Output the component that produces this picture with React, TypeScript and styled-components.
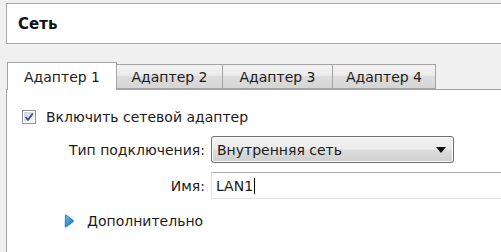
import React from "react";
import styled, { createGlobalStyle } from "styled-components";

const Global = createGlobalStyle`
  html, body { margin: 0; padding: 0; background: #f0f0f0; }
  body { font-family: "DejaVu Sans", Verdana, sans-serif; color: #1b1b1b; }
`;

const Page = styled.div`
  width: 501px;
  height: 252px;
  overflow: hidden;
  background: #f0f0f0;
  padding: 3px 0 0 6px;
  box-sizing: border-box;
  display: flex;
  flex-direction: column;
`;

const Header = styled.div`
  height: 41px;
  box-sizing: border-box;
  background: #fff;
  border: 1px solid #a7a7a7;
  border-right: none;
  display: flex;
  align-items: center;
  padding-left: 11px;
  font-weight: bold;
  font-size: 15px;
  color: #111;
`;

const TabStrip = styled.div`
  margin-top: 17px;
  display: flex;
  align-items: flex-end;
  height: 28px;
  padding-left: 1px;
  position: relative;
  z-index: 1;
`;

const Tab = styled.div<{ $active?: boolean; $w: number }>`
  width: ${(p) => p.$w}px;
  box-sizing: border-box;
  height: ${(p) => (p.$active ? 28 : 25)}px;
  margin-bottom: ${(p) => (p.$active ? -1 : 0)}px;
  border: 1px solid #a4a4a4;
  border-bottom: ${(p) => (p.$active ? "none" : "1px solid #a4a4a4")};
  margin-left: ${(p) => (p.$active ? 0 : -1)}px;
  background: ${(p) =>
    p.$active ? "#fff" : "linear-gradient(#f3f3f3, #ebebeb 45%, #dcdcdc 50%, #d6d6d6)"};
  display: flex;
  align-items: center;
  justify-content: center;
  font-size: 14px;
  color: #1b1b1b;
`;

const Panel = styled.div`
  flex: 1;
  background: #fff;
  border-top: 1px solid #a4a4a4;
  border-left: 1px solid #a4a4a4;
  display: flex;
  flex-direction: column;
  padding: 19px 0 0 15px;
`;

const CheckRow = styled.label`
  display: flex;
  align-items: center;
  gap: 10px;
  font-size: 14px;
  height: 16px;
`;

const Form = styled.div`
  display: grid;
  grid-template-columns: 183px auto;
  column-gap: 6px;
  row-gap: 9px;
  margin-top: 11px;
  align-items: center;
  font-size: 14px;
`;

const Label = styled.div`
  text-align: right;
`;

const Select = styled.div`
  width: 243px;
  height: 27px;
  box-sizing: border-box;
  border: 1px solid #707070;
  border-radius: 3px;
  background: linear-gradient(#f2f2f2, #ebebeb 48%, #dddddd 52%, #cfcfcf);
  display: flex;
  align-items: center;
  justify-content: space-between;
  padding: 0 7px 0 5px;
  box-shadow: inset 0 0 0 1px #fcfcfc;
`;

const Input = styled.div`
  width: 300px;
  height: 27px;
  box-sizing: border-box;
  border: 1px solid #dfe3e8;
  border-top-color: #abadb3;
  border-right: none;
  background: #fff;
  display: flex;
  align-items: center;
  padding-left: 4px;
`;

const Caret = styled.span`
  display: inline-block;
  width: 1px;
  height: 16px;
  background: #000;
  margin-left: 1px;
`;

const Expander = styled.div`
  display: flex;
  align-items: center;
  gap: 13px;
  margin: 14px 0 0 42px;
  font-size: 14px;
  height: 16px;
`;

function CheckBox() {
  return (
    <svg width="14" height="14" viewBox="0 0 14 14">
      <defs>
        <linearGradient id="cbg" x1="0" y1="0" x2="1" y2="1">
          <stop offset="0" stopColor="#cdd3da" />
          <stop offset="1" stopColor="#f4f6f8" />
        </linearGradient>
      </defs>
      <rect x="0.5" y="0.5" width="13" height="13" fill="#fff" stroke="#8e8f8f" />
      <rect x="2" y="2" width="10" height="10" fill="url(#cbg)" />
      <path d="M3.5 7 L6 9.8 L10.8 3.5" fill="none" stroke="#3a4d8a" strokeWidth="1.8" />
    </svg>
  );
}

function Arrow() {
  return (
    <svg width="10" height="6" viewBox="0 0 10 6">
      <path d="M0 0 H10 L5 6 Z" fill="#111" />
    </svg>
  );
}

function Triangle() {
  return (
    <svg width="10" height="14" viewBox="0 0 10 14">
      <defs>
        <linearGradient id="tri" x1="0" y1="0" x2="1" y2="1">
          <stop offset="0" stopColor="#6fc0f0" />
          <stop offset="1" stopColor="#0a6bc4" />
        </linearGradient>
      </defs>
      <path
        d="M1.5 1.2 Q1 0.6 2 1 L9 6.2 Q9.8 7 9 7.8 L2 13 Q1 13.4 1.2 12.5 Z"
        fill="url(#tri)"
        stroke="#1663a8"
        strokeWidth="0.8"
      />
    </svg>
  );
}

export default function App() {
  const tabs = [
    { label: "Адаптер 1", w: 110 },
    { label: "Адаптер 2", w: 107 },
    { label: "Адаптер 3", w: 111 },
    { label: "Адаптер 4", w: 104 },
  ];
  return (
    <>
      <Global />
      <Page>
        <Header>Сеть</Header>
        <TabStrip>
          {tabs.map((t, i) => (
            <Tab key={t.label} $active={i === 0} $w={t.w}>
              {t.label}
            </Tab>
          ))}
        </TabStrip>
        <Panel>
          <CheckRow>
            <CheckBox />
            Включить сетевой адаптер
          </CheckRow>
          <Form>
            <Label>Тип подключения:</Label>
            <Select>
              <span>Внутренняя сеть</span>
              <Arrow />
            </Select>
            <Label>Имя:</Label>
            <Input>
              LAN1
              <Caret />
            </Input>
          </Form>
          <Expander>
            <Triangle />
            Дополнительно
          </Expander>
        </Panel>
      </Page>
    </>
  );
}
